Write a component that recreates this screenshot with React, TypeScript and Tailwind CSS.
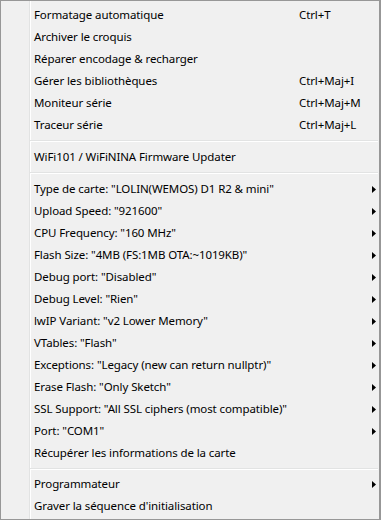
import React from "react";

type Item =
  | { kind: "item"; label: string; shortcut?: string; sub?: boolean }
  | { kind: "sep"; h: string };

const items: Item[] = [
  { kind: "item", label: "Formatage automatique", shortcut: "Ctrl+T" },
  { kind: "item", label: "Archiver le croquis" },
  { kind: "item", label: "Réparer encodage & recharger" },
  { kind: "item", label: "Gérer les bibliothèques", shortcut: "Ctrl+Maj+I" },
  { kind: "item", label: "Moniteur série", shortcut: "Ctrl+Maj+M" },
  { kind: "item", label: "Traceur série", shortcut: "Ctrl+Maj+L" },
  { kind: "sep", h: "h-[10px]" },
  { kind: "item", label: "WiFi101 / WiFiNINA Firmware Updater" },
  { kind: "sep", h: "h-[10px]" },
  { kind: "item", label: 'Type de carte: "LOLIN(WEMOS) D1 R2 & mini"', sub: true },
  { kind: "item", label: 'Upload Speed: "921600"', sub: true },
  { kind: "item", label: 'CPU Frequency: "160 MHz"', sub: true },
  { kind: "item", label: 'Flash Size: "4MB (FS:1MB OTA:~1019KB)"', sub: true },
  { kind: "item", label: 'Debug port: "Disabled"', sub: true },
  { kind: "item", label: 'Debug Level: "Rien"', sub: true },
  { kind: "item", label: 'lwIP Variant: "v2 Lower Memory"', sub: true },
  { kind: "item", label: 'VTables: "Flash"', sub: true },
  { kind: "item", label: 'Exceptions: "Legacy (new can return nullptr)"', sub: true },
  { kind: "item", label: 'Erase Flash: "Only Sketch"', sub: true },
  { kind: "item", label: 'SSL Support: "All SSL ciphers (most compatible)"', sub: true },
  { kind: "item", label: 'Port: "COM1"', sub: true },
  { kind: "item", label: "Récupérer les informations de la carte" },
  { kind: "sep", h: "h-[9px]" },
  { kind: "item", label: "Programmateur", sub: true },
  { kind: "item", label: "Graver la séquence d'initialisation" },
];

function Arrow() {
  return (
    <svg width="4" height="7" viewBox="0 0 4 7" className="absolute left-[341px] top-[8px]">
      <path d="M0 0 L4 3.5 L0 7 Z" fill="#000" />
    </svg>
  );
}

export default function App() {
  return (
    <div
      className="w-[381px] h-[520px] bg-[#f0f0f0] border border-[#979797] border-r-2 flex text-[11.5px] tracking-[-0.1px] text-black overflow-hidden"
      style={{ fontFamily: '"Noto Sans", "Open Sans", sans-serif' }}
    >
      <div className="w-[29px] shrink-0 border-r border-[#e2e3e3]" />
      <div className="w-px shrink-0 bg-white" />
      <div className="flex-1 pt-[3px] flex flex-col">
        {items.map((it, i) =>
          it.kind === "sep" ? (
            <div key={i} className={`${it.h} shrink-0 flex flex-col justify-center -ml-px mr-[1px]`}>
              <div className="h-px bg-[#e2e3e3]" />
              <div className="h-px bg-white" />
            </div>
          ) : (
            <div key={i} className="h-[22px] shrink-0 relative flex items-center pl-[3px] whitespace-nowrap">
              <span>{it.label}</span>
              {it.shortcut && (
                <span className="absolute left-[268px]">{it.shortcut}</span>
              )}
              {it.sub && <Arrow />}
            </div>
          )
        )}
      </div>
    </div>
  );
}
